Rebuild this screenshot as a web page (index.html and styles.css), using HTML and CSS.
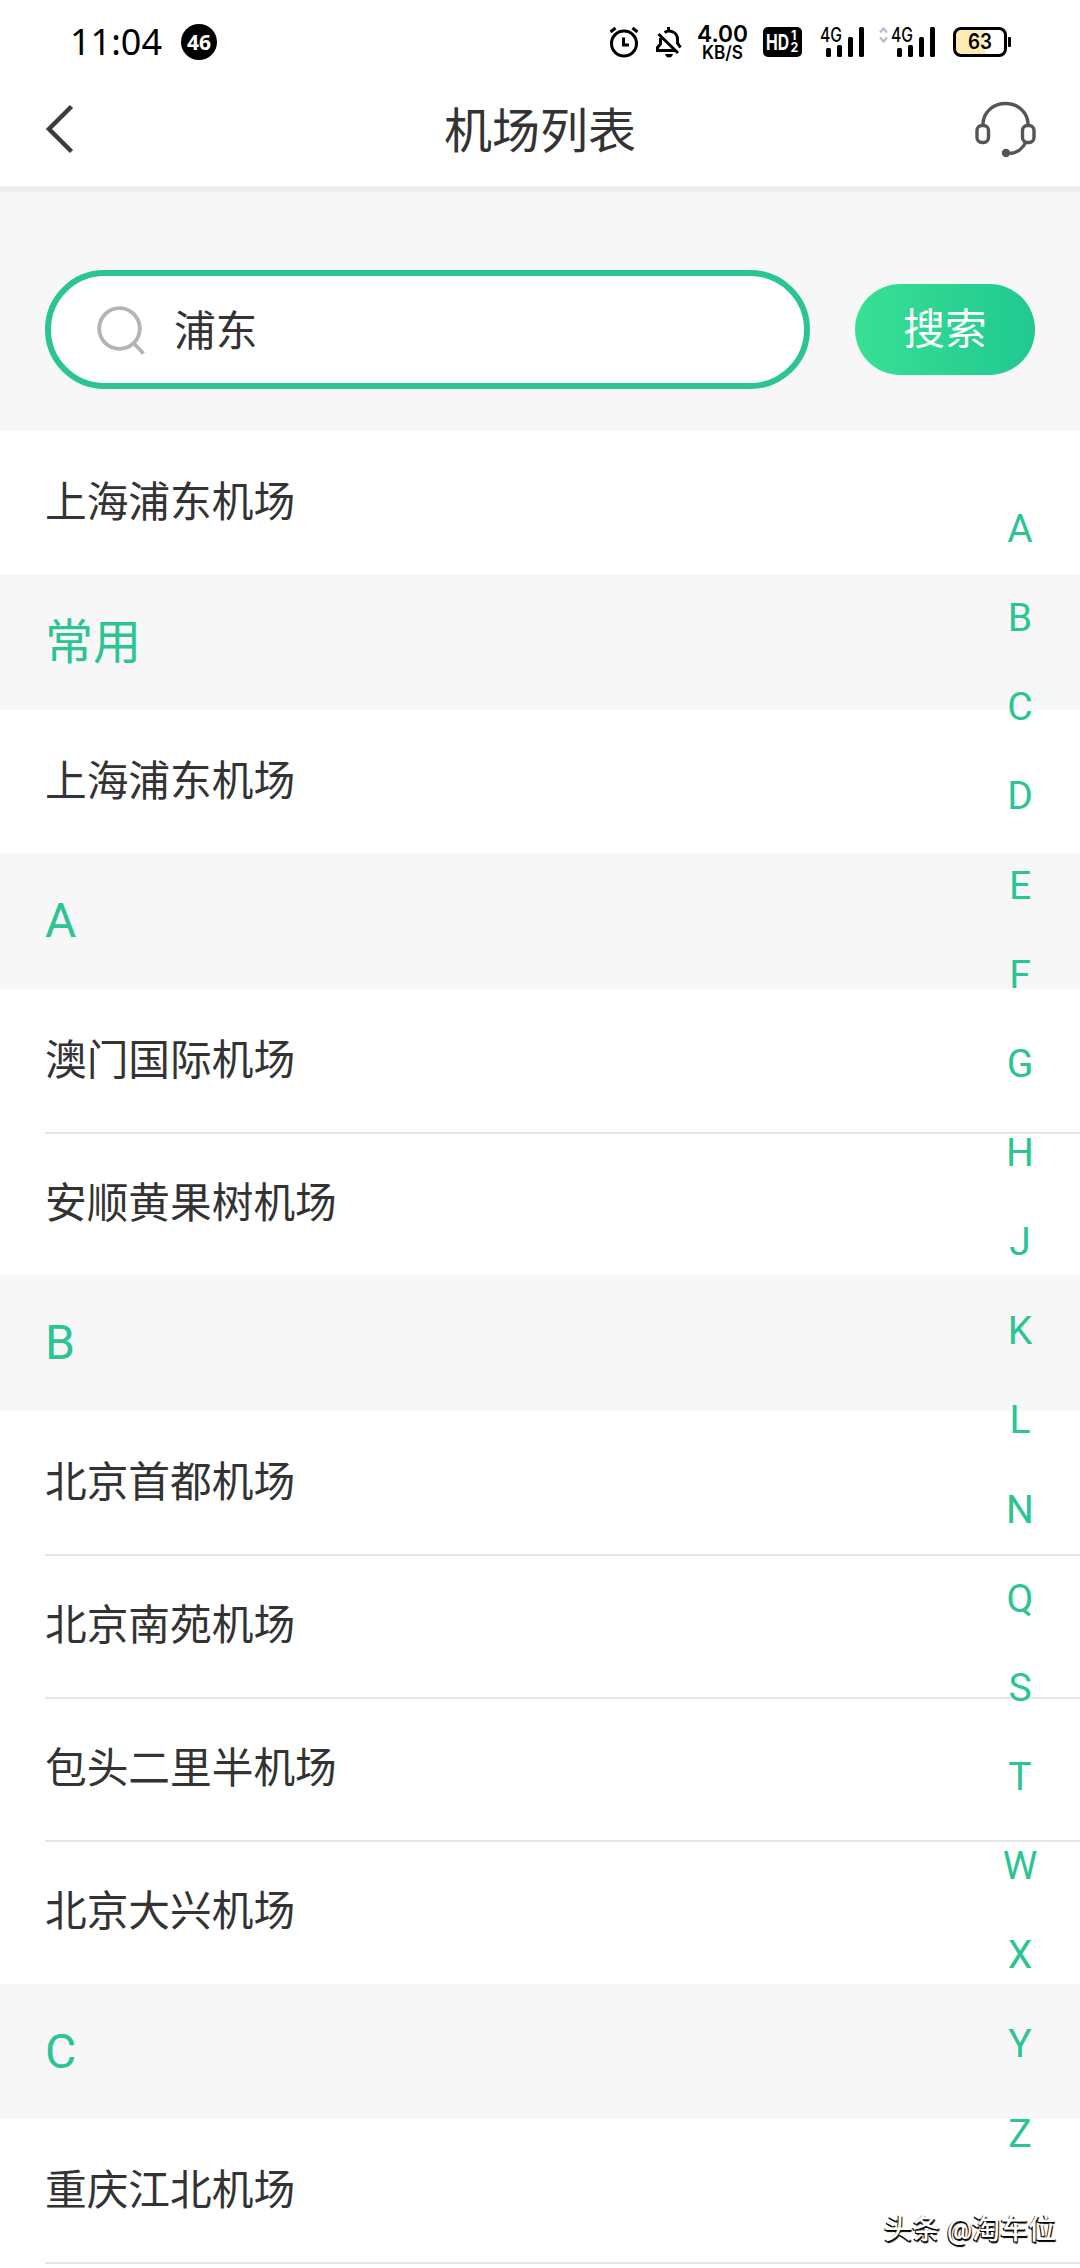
FILE: index.html
```html
<!DOCTYPE html>
<html lang="zh-CN">
<head>
<meta charset="utf-8">
<title>机场列表</title>
<link rel="stylesheet" href="styles.css">
</head>
<body>
<div class="screen">
  <div class="status">
    <span class="clock">11:04</span>
    <span class="count">46</span>
    <svg class="st-icons" width="460" height="80" viewBox="590 0 460 80">
      <g fill="none" stroke="#000" stroke-width="3">
        <circle cx="624" cy="43.500" r="12.500"/>
        <path d="M623.500 37.500v7.500h5.500M610.500 32l5-4M637.500 32l-5-4"/>
        <path d="M676 50.500h-18.500v-3l3-3.500v-6M664.500 32.500q4-2.500 8.500-.5 4.500 2 4.500 7.500v3.500l3 4.500M668.500 27v4M658.500 34l19.500 19"/>
      </g>
      <path d="M665 54h8q-1 3.500-4 3.500t-4-3.500z"/>
      <text class="speed" x="697" y="41.500" textLength="51" lengthAdjust="spacingAndGlyphs">4.00</text>
      <text class="unit" x="702" y="59" textLength="41" lengthAdjust="spacingAndGlyphs">KB/S</text>
      <rect x="763" y="27" width="39" height="30" rx="5"/>
      <text class="hd" x="766" y="50" textLength="23" lengthAdjust="spacingAndGlyphs">HD</text>
      <text class="hdn" x="791" y="40">1</text>
      <text class="hdn" x="790.500" y="52">2</text>
      <g id="signal">
        <text class="gen" x="820" y="42" textLength="22" lengthAdjust="spacingAndGlyphs">4G</text>
        <rect x="826" y="48" width="5" height="9" rx="1.500"/>
        <rect x="837" y="45" width="5" height="12" rx="1.500"/>
        <rect x="848" y="37" width="5" height="20" rx="1.500"/>
        <rect x="859" y="27" width="5" height="30" rx="1.500"/>
      </g>
      <use href="#signal" x="71"/>
      <path d="M880 32.500l3.500-4 3.500 4M880 37.500l3.500 4 3.500-4" fill="none" stroke="#bbb" stroke-width="2.200"/>
      <rect x="954.500" y="28.500" width="51" height="27" rx="6.500" fill="#fff"/>
      <path d="M961 28.500h24v27h-24q-6.500 0-6.500-6.500v-14q0-6.500 6.500-6.500z" fill="#fdebb5"/>
      <rect x="954.500" y="28.500" width="51" height="27" rx="6.500" fill="none" stroke="#000" stroke-width="3"/>
      <rect x="1008" y="37" width="3" height="10" rx="1"/>
      <text class="batt" x="968" y="49" textLength="24" lengthAdjust="spacingAndGlyphs">63</text>
    </svg>
  </div>
  <header class="nav">
    <svg width="64" height="52" viewBox="0 0 64 52"><path d="M28.500 3.500L6 26l22.500 22.500" fill="none" stroke="#3c3c3c" stroke-width="4.500"/></svg>
    <h1>机场列表</h1>
    <svg width="64" height="58" viewBox="972 99 64 58" fill="none" stroke="#555" stroke-width="3.400">
      <path d="M982 124v-2c1-11.500 10.500-19.500 22.500-19.500s21.500 8 22.500 19.500v2M1025 141c-3 6-9 11-16 11.500"/>
      <rect x="976" y="124.500" width="11.500" height="17" rx="5"/>
      <rect x="1021.500" y="124.500" width="11.500" height="17" rx="5"/>
      <circle cx="1005" cy="152" r="3.200" fill="#555" stroke-width="2"/>
    </svg>
  </header>
  <div class="search">
    <div class="field">
      <svg width="50" height="52" viewBox="0 0 50 52" fill="none" stroke="#b4b4b4" stroke-width="3.800"><circle cx="24.500" cy="24.500" r="20.300"/><path d="M38.500 39L48.500 49.500"/></svg>
      <span>浦东</span>
    </div>
    <div class="btn">搜索</div>
  </div>
  <main class="list">
    <div class="item">上海浦东机场</div>
    <div class="group cn">常用</div>
    <div class="item">上海浦东机场</div>
    <div class="group">A</div>
    <div class="item">澳门国际机场</div>
    <div class="item">安顺黄果树机场</div>
    <div class="group">B</div>
    <div class="item">北京首都机场</div>
    <div class="item">北京南苑机场</div>
    <div class="item">包头二里半机场</div>
    <div class="item">北京大兴机场</div>
    <div class="group">C</div>
    <div class="item">重庆江北机场</div>
    <div class="item"></div>
  </main>
  <nav class="index">
    <span>A</span><span>B</span><span>C</span><span>D</span><span>E</span><span>F</span><span>G</span><span>H</span><span>J</span><span>K</span><span>L</span><span>N</span><span>Q</span><span>S</span><span>T</span><span>W</span><span>X</span><span>Y</span><span>Z</span>
  </nav>
  <div class="mark">头条 @淘车位</div>
</div>
</body>
</html>
```
FILE: styles.css
```css
* { box-sizing: border-box; }
body { margin: 0; background: #fff; }
.screen {
  position: relative;
  width: 1080px;
  height: 2268px;
  overflow: hidden;
  background: #fff;
  color: #333;
  font-family: Roboto, "Noto Sans CJK SC", sans-serif;
}
.status { display: flex; align-items: center; height: 80px; padding: 0 30px 0 70px; color: #000; }
.clock { width: 93px; font: 36px/80px "Noto Sans", sans-serif; white-space: nowrap; margin-top: 3px; }
.count {
  width: 36px; height: 36px; margin: 4px 0 0 18px; border-radius: 50%;
  background: #000; color: #fff; text-align: center;
  font: bold 21px/37px "Noto Sans", sans-serif;
}
.st-icons { margin-left: auto; font-family: Inter, sans-serif; }
.speed { font-size: 23px; font-weight: 600; }
.unit { font-size: 18px; font-weight: 600; }
.hd { font-size: 22px; font-weight: 700; fill: #fff; }
.hdn { font-size: 12.5px; font-weight: 700; fill: #fff; }
.gen { font-size: 20px; font-weight: 500; }
.batt { font-size: 21px; font-weight: 600; }

.nav {
  display: flex; align-items: center; justify-content: space-between;
  height: 112px; padding: 0 43px 8px; border-bottom: 6px solid #ededed;
}
.nav h1 { margin: 0; padding-top: 5px; font-size: 48px; line-height: 70px; font-weight: 400; }

.search { display: flex; align-items: flex-start; justify-content: space-between; height: 239px; padding: 78px 45px 0; background: #f7f7f7; }
.field {
  display: flex; align-items: center; width: 765px; height: 119px; padding-left: 44px;
  border: 6px solid #2bc493; border-radius: 60px; background: #fff;
  font-size: 41.7px;
}
.field span { margin-left: 29px; padding-bottom: 4px; }
.btn {
  width: 180px; height: 91px; margin-top: 14px; border-radius: 46px;
  background: linear-gradient(90deg, #38e094, #21c891);
  color: #fff; text-align: center; font-size: 41.7px; line-height: 91px;
}
.item { height: 143.25px; margin-left: 45px; font-size: 41.7px; line-height: 144px; }
.item + .item { border-top: 2px solid #e6e6e6; line-height: 140px; }
.group { height: 135.5px; padding-left: 45px; background: #f7f7f7; color: #2bc493; font-size: 48px; line-height: 135px; }
.group.cn { line-height: 137px; }
.index {
  position: absolute; top: 485px; right: 25px; width: 70px;
  display: flex; flex-direction: column; text-align: center;
  color: #2bc493; font-size: 39px;
}
.index span { height: 89.15px; line-height: 89px; }
.mark {
  position: absolute; right: 24px; bottom: 18px;
  color: #fff; font-size: 28px; line-height: 40px; font-weight: 500;
  text-shadow: -1px 1px 0 #000, 1px 2px 1px #000;
}
```
